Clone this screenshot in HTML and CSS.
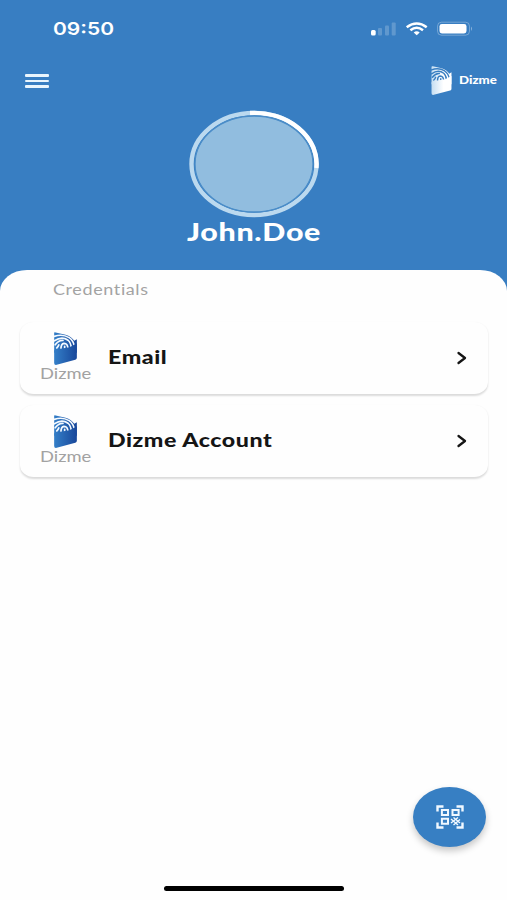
FILE: index.html
```html
<!DOCTYPE html>
<html lang="en">
<head>
<meta charset="utf-8">
<title>Dizme</title>
<link rel="stylesheet" href="styles.css">
</head>
<body>
<svg class="defs" width="0" height="0" aria-hidden="true">
  <defs>
    <linearGradient id="blue" x1="0" y1="0" x2="1" y2="0"><stop offset="0" stop-color="#347fc8"/><stop offset="1" stop-color="#18479a"/></linearGradient>
    <linearGradient id="pale" x1="0" y1="0" x2="1" y2="0"><stop offset="0" stop-color="#c5def2"/><stop offset=".6" stop-color="#fff"/></linearGradient>
    <symbol id="wallet" viewBox="0 0 22 32">
      <path d="M0 .8 Q0 0 1.500 .4 L11 2.600 Q17 4.500 19.500 8.500 L22 7 V20 H0Z"/>
      <g class="wallet-lines" fill="none" stroke-width="1.600" stroke-linecap="round">
        <path d="M0 4.300 Q8 1.500 14.500 5.500 Q18.800 8.500 19.600 14"/>
        <path d="M0 8.600 Q7.500 3.500 13.500 8 Q16.300 10.500 16.700 16"/>
        <path d="M1 12.400 Q4.500 7.800 8.600 8.200"/>
        <path d="M6.700 17 Q6.300 11.300 9.600 11 Q13.300 11 13.600 17"/>
        <path d="M10.200 17 V14"/>
        <path d="M2.500 15.500 Q3.800 14.500 4.500 12.500"/>
      </g>
      <path d="M0 18.500 Q0 17.300 1.500 16.900 L15 14.700 L22 11 V25 Q22 26.500 20.500 27 L2.500 31.800 Q0 32.300 0 30Z"/>
    </symbol>
  </defs>
</svg>
<div class="app">
  <header class="hero">
    <div class="status">
      <span class="time"><span class="wide">09:50</span></span>
      <svg class="indicators" width="104" height="16" viewBox="0 0 104 16">
        <g fill="#fff">
          <rect x="2" y="9" width="4.700" height="5.500" rx="1.500"/>
          <g opacity=".2"><rect x="9" y="7" width="4" height="7.500" rx="1"/><rect x="16" y="4.500" width="4" height="10" rx="1"/><rect x="22.700" y="1.500" width="4" height="13" rx="1"/></g>
          <path d="M44.700 11.400 Q47.700 9.200 50.700 11.400 L47.700 14.200Z"/>
        </g>
        <g fill="none" stroke="#fff" stroke-width="2.500"><path d="M37.700 6.200 Q47.700-1.300 57.700 6.200"/><path d="M41.400 9.300 Q47.700 4.300 54 9.300"/></g>
        <rect x="68.500" y="1.200" width="32" height="13" rx="4" fill="none" stroke="#fff" opacity=".3"/>
        <rect x="70.500" y="3" width="27" height="9.500" rx="2.400" fill="#fff"/>
        <path d="M102 5.500 Q104 7.700 102 9.900Z" fill="#fff" opacity=".4"/>
      </svg>
    </div>
    <div class="toolbar">
      <span class="menu"><i></i><i></i><i></i></span>
      <div class="brand">
        <svg class="wallet-pale" width="21" height="29"><use href="#wallet" width="21" height="29"/></svg>
        <span class="brand-name"><span class="wide">Dizme</span></span>
      </div>
    </div>
    <div class="profile">
      <svg width="132" height="108" viewBox="0 0 132 108">
        <ellipse cx="66" cy="54" rx="62.500" ry="51" fill="none" stroke="#bbd9ef" stroke-width="4.400"/>
        <path d="M62 3 A62.500 51 0 0 1 128.400 58" fill="none" stroke="#fff" stroke-width="4.400"/>
        <ellipse cx="66" cy="54" rx="59" ry="48" fill="#91bddf" stroke="#4b8dc8" stroke-width="1.300"/>
      </svg>
      <h1><span class="wide">John.Doe</span></h1>
    </div>
  </header>
  <main class="sheet">
    <h2><span class="wide">Credentials</span></h2>
    <ul class="cards">
      <li class="card">
        <div class="issuer">
          <svg class="wallet-blue" width="23" height="33"><use href="#wallet" width="23" height="33"/></svg>
          <span class="issuer-name"><span class="wide">Dizme</span></span>
        </div>
        <span class="title"><span class="wide">Email</span></span>
        <svg class="chevron" width="12" height="14" viewBox="0 0 12 14"><path d="M2.500 2 L9 7 L2.500 12"/></svg>
      </li>
      <li class="card">
        <div class="issuer">
          <svg class="wallet-blue" width="23" height="33"><use href="#wallet" width="23" height="33"/></svg>
          <span class="issuer-name"><span class="wide">Dizme</span></span>
        </div>
        <span class="title"><span class="wide">Dizme Account</span></span>
        <svg class="chevron" width="12" height="14" viewBox="0 0 12 14"><path d="M2.500 2 L9 7 L2.500 12"/></svg>
      </li>
    </ul>
  </main>
  <footer class="bottom">
    <button class="scan" aria-label="Scan">
      <svg width="28" height="24" viewBox="0 0 28 24" fill="none" stroke="#f0f8ff">
        <path stroke-width="2.400" d="M1.500 6.500 V1.500 H7.500 M20.500 1.500 H26.500 V6.500 M1.500 17.500 V22.500 H7.500 M20.500 22.500 H26.500 V17.500"/>
        <path stroke-width="2" d="M5.900 5 H12 V9.900 H5.900Z M16.500 5 H22.600 V9.900 H16.500Z M5.900 13.800 H12 V18.700 H5.900Z"/>
        <path stroke-width="1.400" d="M17.500 12.500 L24 18 M15 14 L22 20 M22 12.500 L15 18 M24 14.500 L17.500 20"/>
      </svg>
    </button>
    <div class="home-bar"></div>
  </footer>
</div>
</body>
</html>
```
FILE: styles.css
```css
* { box-sizing: border-box; }
body { margin: 0; font-family: Lato, "Liberation Sans", sans-serif; font-variant-ligatures: none; background: #fefefe; }
h1, h2, ul { margin: 0; padding: 0; font-weight: inherit; }
.defs { display: block; height: 0; }
svg { display: block; flex: none; }
.app { width: 507px; height: 900px; display: flex; flex-direction: column; background: #387ec2; }
.wide { display: inline-block; white-space: nowrap; transform-origin: 0 50%; transform: scaleX(1.24); }
.hero { height: 270px; flex: none; color: #fff; }
.status { height: 58px; padding: 0 34px 0 53px; display: flex; align-items: center; justify-content: space-between; }
.time { font: 600 17.500px/22px Inter, sans-serif; margin-top: -1px; }
.time .wide { transform: scaleX(1.2); }
.toolbar { height: 44px; padding: 0 10px 0 25px; display: flex; align-items: center; justify-content: space-between; }
.menu { display: grid; gap: 3px; width: 24px; margin-top: 2px; }
.menu i { height: 2.500px; background: #e9f5fd; border-radius: 1px; }
.brand { display: flex; align-items: center; gap: 7px; width: 66px; }
.brand-name { font-size: 10.700px; font-weight: 900; line-height: 14px; }
.wallet-pale { fill: url(#pale); stroke: #387ec2; }
.wallet-blue { fill: url(#blue); stroke: #f5faff; }
#wallet > path { stroke: none; }
.profile { padding-top: 8px; display: grid; justify-items: center; }
.profile h1 { width: 134px; font-size: 24.500px; font-weight: 900; line-height: 28px; letter-spacing: .55px; }
.sheet { flex: 1; background: #fefefe; border-radius: 27px 27px 0 0 / 21px 21px 0 0; }
.sheet h2 { padding: 10px 0 0 53px; height: 52px; font-size: 14.500px; line-height: 20px; letter-spacing: .5px; color: #a3a3a3; }
.cards { list-style: none; padding: 0 19px 0 20px; display: grid; gap: 11px; }
.card { height: 72px; display: flex; align-items: center; padding: 0 20px; background: #fefefe; border-radius: 14px / 12px; box-shadow: 0 1.500px 2px #00000024; }
.issuer { width: 67.500px; height: 72px; padding-top: 10px; }
.issuer svg { margin-left: 14px; }
.issuer-name { display: block; font-size: 14.800px; line-height: 16px; color: #a2a2a2; }
.title { flex: 1; margin-top: -2px; font-size: 18.700px; font-weight: 900; line-height: 24px; letter-spacing: .45px; color: #151515; }
.chevron { fill: none; stroke: #151515; stroke-width: 2.300; stroke-linecap: round; stroke-linejoin: round; }
.bottom { height: 113px; flex: none; background: #fefefe; display: flex; flex-direction: column; align-items: center; }
.scan { align-self: flex-end; margin-right: 21px; width: 73px; height: 60px; flex: none; padding: 0; border: 0; border-radius: 50%; background: #377fc3; display: grid; place-items: center; box-shadow: 0 4px 7px #00000038; }
.home-bar { width: 180px; height: 5px; margin-top: 39px; border-radius: 3px; background: #000; }
```
